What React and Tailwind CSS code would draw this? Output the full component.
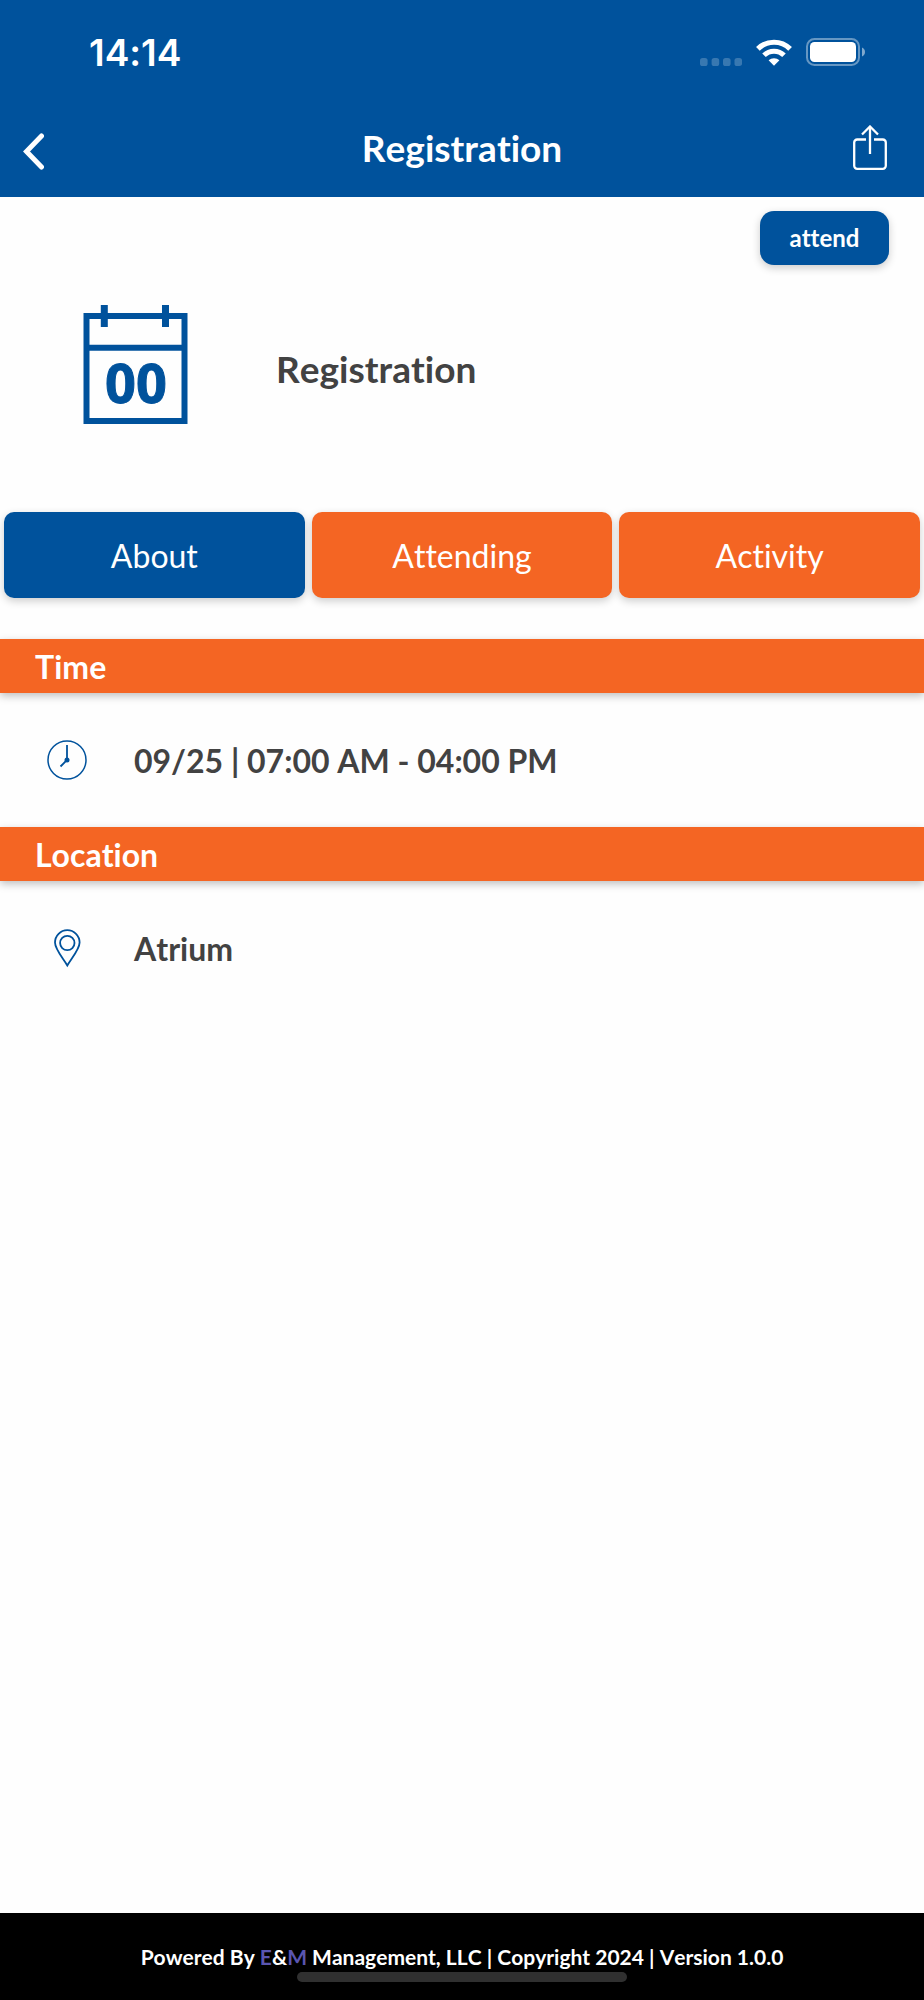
import React, { useState } from 'react';

const TABS = ['About', 'Attending', 'Activity'];

function SignalDots() {
  return (
    <svg width="42" height="8" viewBox="0 0 42 8" fill="#fff" fillOpacity="0.22" aria-hidden="true">
      <rect x="0" width="7.6" height="8" rx="2.6" />
      <rect x="11.6" width="7.6" height="8" rx="2.6" />
      <rect x="23" width="7.6" height="8" rx="2.6" />
      <rect x="34.5" width="7.6" height="8" rx="2.6" />
    </svg>
  );
}

function WifiIcon() {
  return (
    <svg width="36" height="27" viewBox="0 0 36 27" fill="none" stroke="#fff" aria-hidden="true">
      <path d="M1.9 9.9a22.8 22.8 0 0 1 32.2 0" strokeWidth="5.2" />
      <path d="M8 16.3a14.2 14.2 0 0 1 20 0" strokeWidth="5" />
      <path d="M18 26.8l-5.4-5.5a7.8 7.8 0 0 1 10.8 0z" fill="#fff" stroke="none" />
    </svg>
  );
}

function BatteryIcon() {
  return (
    <svg width="60" height="28" viewBox="0 0 60 28" aria-hidden="true">
      <rect x="1" y="1" width="52" height="26" rx="7.5" fill="none" stroke="#fff" strokeOpacity="0.4" strokeWidth="2" />
      <rect x="4" y="4" width="46" height="20" rx="4.5" fill="#fff" />
      <path d="M56 9.5c1.8.8 3 2.5 3 4.5s-1.2 3.7-3 4.5z" fill="#fff" fillOpacity="0.5" />
    </svg>
  );
}

function BackIcon() {
  return (
    <svg width="22" height="37" viewBox="0 0 22 37" fill="none" stroke="#fff" strokeWidth="5" aria-hidden="true">
      <path d="M19.5 3l-15 15.5 15 15.5" strokeLinecap="round" />
    </svg>
  );
}

function ShareIcon() {
  return (
    <svg width="34" height="45" viewBox="0 0 34 45" fill="none" stroke="#fff" strokeWidth="2.3" aria-hidden="true">
      <path d="M13 14.5H4.2a3 3 0 0 0-3 3v23.3a3 3 0 0 0 3 3h25.6a3 3 0 0 0 3-3V17.5a3 3 0 0 0-3-3H21" />
      <path d="M17 29V2" />
      <path d="M9 9.5l8-8 8 8" />
    </svg>
  );
}

function CalendarIcon() {
  return (
    <svg width="105" height="128" viewBox="0 0 105 128" aria-hidden="true">
      <g fill="none" stroke="#00529c" strokeWidth="6">
        <path d="M3.5 11h98v105h-98z" />
        <path d="M3.5 42.7h98" />
      </g>
      <path d="M17.8 0h7v22h-7zM79 0h7v22h-7z" fill="#00529c" />
      <text
        x="53"
        y="98"
        textAnchor="middle"
        fill="#00529c"
        stroke="#00529c"
        strokeWidth="1"
        fontSize="54"
        fontWeight="700"
        fontFamily="'Open Sans', 'Noto Sans', sans-serif"
      >
        00
      </text>
    </svg>
  );
}

function ClockIcon() {
  return (
    <svg width="40" height="40" viewBox="0 0 40 40" fill="none" stroke="#00529c" aria-hidden="true">
      <circle cx="20" cy="20" r="19" strokeWidth="1.5" />
      <path d="M20 5v15l-6.5 6.5" strokeWidth="1.8" />
      <circle cx="20" cy="20" r="2.5" fill="#00529c" stroke="none" />
    </svg>
  );
}

function PinIcon() {
  return (
    <svg width="40" height="40" viewBox="0 0 40 40" fill="none" stroke="#00529c" strokeWidth="1.8" aria-hidden="true">
      <path d="M20.3 37.5C17 31.5 8 21.5 8 14.5a12.3 12.3 0 0 1 24.6 0c0 7-9 17-12.3 23z" />
      <circle cx="20.3" cy="15" r="7.2" />
    </svg>
  );
}

function Section({ title, icon, children }) {
  return (
    <section>
      <h3 className="h-[54px] pt-[2px] pl-[35px] flex items-center bg-[#f46523] text-white text-[32px] leading-[40px] font-bold shadow-[0_3px_8px_rgba(0,0,0,0.25)]">
        {title}
      </h3>
      <div className="h-20 pl-[47px] my-[27px] flex items-center gap-[47px] text-[32px] leading-[40px] font-bold">
        {icon}
        <p className="pt-[2px]">{children}</p>
      </div>
    </section>
  );
}

export default function App() {
  const [tab, setTab] = useState('About');

  return (
    <div className="min-h-screen flex flex-col bg-[#fefefe] text-[#424242] font-['Lato',sans-serif] [font-variant-ligatures:none] [font-kerning:none]">

      {/* Header */}
      <header className="bg-[#00529c] text-white">
        <div className="h-[104px] pl-[89px] pr-[58px] flex items-center justify-between">
          <span className="pt-[2px] text-[37px] leading-[44px] font-semibold font-['Inter',sans-serif]">14:14</span>
          <div className="flex items-center gap-[14px]">
            <div className="pt-5">
              <SignalDots />
            </div>
            <WifiIcon />
            <BatteryIcon />
          </div>
        </div>

        <div className="h-[93px] pl-[22px] pr-[37px] pb-[6px] flex items-center justify-between">
          <button aria-label="Back" className="w-[34px] pt-2">
            <BackIcon />
          </button>
          <h1 className="pl-[15px] text-[37px] leading-[44px] font-bold">Registration</h1>
          <button aria-label="Share" className="w-[34px]">
            <ShareIcon />
          </button>
        </div>
      </header>

      <main className="flex-1">
        <div className="pt-[14px] pr-[35px] flex justify-end">
          <button className="w-[129px] h-[54px] rounded-[14px] bg-[#00529c] text-white text-[24px] leading-[32px] font-bold shadow-[0_3px_8px_rgba(0,0,0,0.2)]">
            attend
          </button>
        </div>

        {/* Session title */}
        <div className="pl-[83px] py-10 mb-[39px] flex items-center gap-[88px]">
          <CalendarIcon />
          <h2 className="text-[37px] leading-[44px] font-bold">Registration</h2>
        </div>

        {/* Tabs */}
        <div role="tablist" className="px-1 mb-[41px] grid grid-cols-3 gap-[7px]">
          {TABS.map((t) => (
            <button
              key={t}
              role="tab"
              aria-selected={t === tab}
              onClick={() => setTab(t)}
              className={`h-[86px] pt-[2px] rounded-[10px] text-white text-[32px] leading-[40px] shadow-[0_3px_8px_rgba(0,0,0,0.2)] ${
                t === tab ? 'bg-[#00529c]' : 'bg-[#f46523]'
              }`}
            >
              {t}
            </button>
          ))}
        </div>

        <Section title="Time" icon={<ClockIcon />}>
          09/25 | 07:00 AM - 04:00 PM
        </Section>
        <Section title="Location" icon={<PinIcon />}>
          Atrium
        </Section>
      </main>

      {/* Footer */}
      <footer className="bg-black text-white pt-[31px] pb-[18px] flex flex-col items-center gap-[3px]">
        <p className="text-[21px] leading-[25px] font-bold">
          Powered By <span className="text-[#5a55b0]">E</span>&amp;<span className="text-[#5a55b0]">M</span> Management, LLC |
          Copyright 2024 | Version 1.0.0
        </p>
        <div className="w-[330px] h-[10px] rounded-full bg-[#303030]" />
      </footer>
    </div>
  );
}
